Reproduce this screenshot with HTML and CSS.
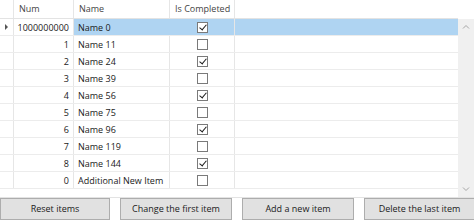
FILE: index.html
```html
<!DOCTYPE html>
<html>
<head>
<meta charset="utf-8">
<link rel="stylesheet" href="styles.css">
</head>
<body>
<div class="app">
  <div class="datagrid">
    <div class="table">
      <div class="row header">
        <div class="cell rh"></div>
        <div class="cell">Num</div>
        <div class="cell">Name</div>
        <div class="cell">Is Completed</div>
        <div class="cell filler"></div>
      </div>
      <div class="row selected">
        <div class="cell rh"><span class="marker"></span></div>
        <div class="cell num current">1000000000</div>
        <div class="cell">Name 0</div>
        <div class="cell chk"><span class="box checked"></span></div>
        <div class="cell filler"></div>
      </div>
      <div class="row">
        <div class="cell rh"></div>
        <div class="cell num">1</div>
        <div class="cell">Name 11</div>
        <div class="cell chk"><span class="box"></span></div>
        <div class="cell filler"></div>
      </div>
      <div class="row">
        <div class="cell rh"></div>
        <div class="cell num">2</div>
        <div class="cell">Name 24</div>
        <div class="cell chk"><span class="box checked"></span></div>
        <div class="cell filler"></div>
      </div>
      <div class="row">
        <div class="cell rh"></div>
        <div class="cell num">3</div>
        <div class="cell">Name 39</div>
        <div class="cell chk"><span class="box"></span></div>
        <div class="cell filler"></div>
      </div>
      <div class="row">
        <div class="cell rh"></div>
        <div class="cell num">4</div>
        <div class="cell">Name 56</div>
        <div class="cell chk"><span class="box checked"></span></div>
        <div class="cell filler"></div>
      </div>
      <div class="row">
        <div class="cell rh"></div>
        <div class="cell num">5</div>
        <div class="cell">Name 75</div>
        <div class="cell chk"><span class="box"></span></div>
        <div class="cell filler"></div>
      </div>
      <div class="row">
        <div class="cell rh"></div>
        <div class="cell num">6</div>
        <div class="cell">Name 96</div>
        <div class="cell chk"><span class="box checked"></span></div>
        <div class="cell filler"></div>
      </div>
      <div class="row">
        <div class="cell rh"></div>
        <div class="cell num">7</div>
        <div class="cell">Name 119</div>
        <div class="cell chk"><span class="box"></span></div>
        <div class="cell filler"></div>
      </div>
      <div class="row">
        <div class="cell rh"></div>
        <div class="cell num">8</div>
        <div class="cell">Name 144</div>
        <div class="cell chk"><span class="box checked"></span></div>
        <div class="cell filler"></div>
      </div>
      <div class="row">
        <div class="cell rh"></div>
        <div class="cell num">0</div>
        <div class="cell">Additional New Item</div>
        <div class="cell chk"><span class="box"></span></div>
        <div class="cell filler"></div>
      </div>
    </div>
    <div class="scrollbar">
      <svg class="arrow" width="16" height="14" viewBox="0 0 16 14"><path d="M5 8.5 L8 5.5 L11 8.5" fill="none" stroke="#a6a6a6" stroke-width="1"/></svg>
      <svg class="arrow" width="16" height="14" viewBox="0 0 16 14"><path d="M5 5.5 L8 8.5 L11 5.5" fill="none" stroke="#a6a6a6" stroke-width="1"/></svg>
    </div>
  </div>
  <div class="buttons">
    <button class="btn">Reset items</button>
    <button class="btn">Change the first item</button>
    <button class="btn">Add a new item</button>
    <button class="btn">Delete the last item</button>
  </div>
</div>
</body>
</html>
```
FILE: styles.css
```css
html, body {
  margin: 0;
  padding: 0;
  background: #ffffff;
}
.app {
  width: 474px;
  height: 220px;
  overflow: hidden;
  display: flex;
  flex-direction: column;
  font-family: "Open Sans", "Noto Sans", sans-serif;
  font-size: 9px;
  color: #1a1a1a;
}
.datagrid {
  height: 202px;
  display: flex;
  border-bottom: 1px solid #e3e3e3;
  box-sizing: border-box;
}
.table {
  flex: 1;
  display: flex;
  flex-direction: column;
}
.row {
  display: grid;
  grid-template-columns: 14px 60px 96px 65px 1fr;
  height: 17px;
  border-bottom: 1px solid #ececec;
  box-sizing: border-box;
}
.row.header {
  height: 19px;
  border-bottom: 1px solid #e3e3e3;
  color: #444444;
}
.cell {
  display: flex;
  align-items: center;
  padding-left: 4px;
  border-right: 1px solid #e6e6e6;
  white-space: nowrap;
  overflow: hidden;
  box-sizing: border-box;
}
.header .cell {
  padding-left: 5px;
  padding-bottom: 1px;
}
.cell.filler {
  border-right: none;
}
.cell.rh {
  padding: 0;
  justify-content: center;
}
.cell.num {
  justify-content: flex-end;
  padding-left: 0;
  padding-right: 4px;
}
.cell.chk {
  justify-content: center;
  padding-left: 0;
}
.selected .cell:not(.rh):not(.current) {
  background: #afd4f2;
}
.selected .cell:nth-child(3) {
  border-right-color: #afd4f2;
}
.marker {
  width: 0;
  height: 0;
  border-top: 3px solid transparent;
  border-bottom: 3px solid transparent;
  border-left: 3px solid #555555;
}
.box {
  width: 11px;
  height: 11px;
  box-sizing: border-box;
  border: 1px solid #7a7a7a;
  background: #ffffff;
  position: relative;
}
.box.checked::after {
  content: "";
  position: absolute;
  left: 3px;
  top: 0px;
  width: 3px;
  height: 6px;
  border-right: 1.5px solid #1a1a1a;
  border-bottom: 1.5px solid #1a1a1a;
  transform: rotate(40deg);
}
.scrollbar {
  width: 16px;
  margin-top: 19px;
  background: #f0f0f0;
  display: flex;
  flex-direction: column;
  justify-content: space-between;
  padding: 1px 0 1px 0;
}
.arrow {
  display: block;
}
.buttons {
  display: grid;
  grid-template-columns: 110px 112px 112px 111px;
  column-gap: 10px;
}
.btn {
  height: 22px;
  margin: 0;
  padding: 0 0 2px 0;
  font-family: "Open Sans", "Noto Sans", sans-serif;
  font-size: 9px;
  color: #1a1a1a;
  background: #e1e1e1;
  border: 1px solid #adadad;
  text-align: center;
}
```
